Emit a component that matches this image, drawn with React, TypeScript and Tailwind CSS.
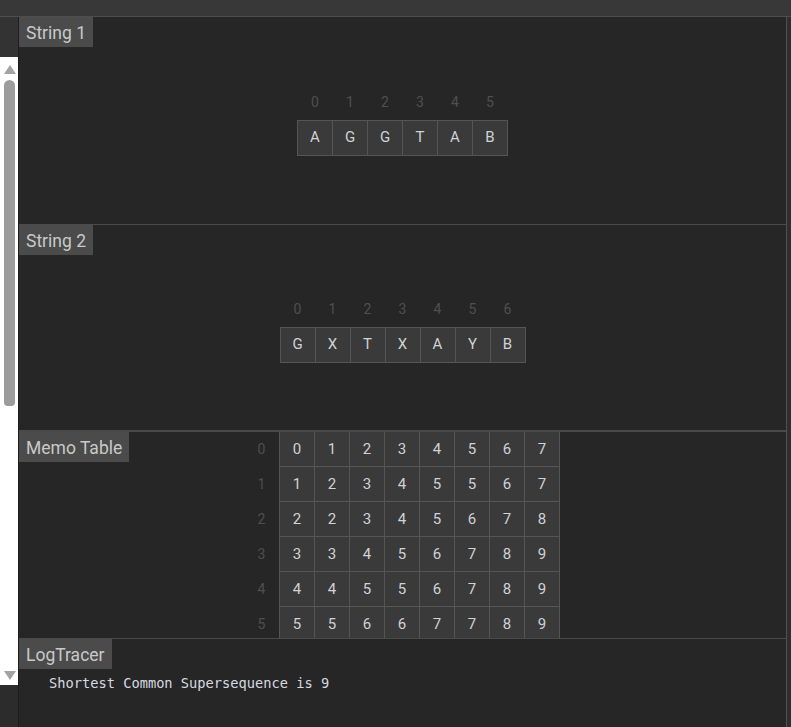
import React from 'react';

const string1 = ['A', 'G', 'G', 'T', 'A', 'B'];
const string2 = ['G', 'X', 'T', 'X', 'A', 'Y', 'B'];
const memo = [
  [0, 1, 2, 3, 4, 5, 6, 7],
  [1, 2, 3, 4, 5, 5, 6, 7],
  [2, 2, 3, 4, 5, 6, 7, 8],
  [3, 3, 4, 5, 6, 7, 8, 9],
  [4, 4, 5, 5, 6, 7, 8, 9],
  [5, 5, 6, 6, 7, 7, 8, 9],
];

const Label = ({ text }: { text: string }) => (
  <div className="absolute left-0 top-0 h-[30px] pt-[1px] px-[7px] bg-[#4b4b4b] text-[#c9c9c9] text-[17.5px] leading-[30px] z-10">
    {text}
  </div>
);

const Array1D = ({ items }: { items: string[] }) => (
  <div className="flex flex-col items-center mt-[5px]">
    <div className="flex h-[20px] mb-[9px] pt-[1px]">
      {items.map((_, i) => (
        <div key={i} className="w-[35px] text-center text-[14px] leading-[20px] text-[#4f4f4f]">
          {i}
        </div>
      ))}
    </div>
    <div className="grid grid-flow-col gap-px p-px bg-[#555555]">
      {items.map((c, i) => (
        <div key={i} className="w-[34px] h-[34px] bg-[#3a3a3a] flex items-center justify-center text-[15px] text-[#cfd2d6]">
          {c}
        </div>
      ))}
    </div>
  </div>
);

const App = () => {
  return (
    <div className="w-[791px] h-[727px] bg-[#2f2f2f] flex flex-col overflow-hidden font-['Roboto',sans-serif]">
      <div className="h-[17px] shrink-0 bg-[#383838] border-b border-[#4e4e4e]" />
      <div className="flex flex-1 min-h-0">
        {/* left scrollbar */}
        <div className="w-[19px] shrink-0 flex flex-col border-r border-[#1d1d1d]">
          <div className="h-[40px] bg-[#333333]" />
          <div className="h-[628px] bg-white flex flex-col items-center pt-[7px]">
            <svg width="12" height="10" viewBox="0 0 12 10" className="ml-[1px]">
              <polygon points="0,10 12,10 6,1" fill="#a3a3a3" />
            </svg>
            <div className="w-[11px] h-[326px] mt-[6px] ml-[1px] rounded-t-[6px] rounded-b-[4px] bg-[#9c9c9c]" />
            <div className="flex-1" />
            <svg width="12" height="10" viewBox="0 0 12 10" className="ml-[1px] mb-[4px]">
              <polygon points="0,0 12,0 6,9" fill="#a3a3a3" />
            </svg>
          </div>
          <div className="flex-1 bg-[#2c2c2c]" />
        </div>

        {/* main panel */}
        <div className="w-[768px] shrink-0 bg-[#262626] border-r border-[#505050] flex flex-col">
          <section className="relative h-[208px] shrink-0 border-b border-[#4a4a4a] flex items-center justify-center">
            <Label text="String 1" />
            <Array1D items={string1} />
          </section>
          <section className="relative h-[207px] shrink-0 border-b-2 border-[#4a4a4a] flex items-center justify-center">
            <Label text="String 2" />
            <Array1D items={string2} />
          </section>
          <section className="relative h-[207px] shrink-0 border-b border-[#4a4a4a] flex items-center justify-center overflow-hidden">
            <Label text="Memo Table" />
            <div className="flex flex-col ml-[-1px] mt-[4px]">
              {memo.map((row, r) => (
                <div key={r} className="flex">
                  <div className="w-[35px] h-[35px] flex items-center justify-center text-[14px] text-[#4f4f4f]">
                    {r}
                  </div>
                  <div className="grid grid-flow-col gap-px pl-px pr-px pb-px bg-[#555555]">
                    {row.map((v, c) => (
                      <div key={c} className="w-[34px] h-[34px] bg-[#3a3a3a] flex items-center justify-center text-[15px] text-[#cfd2d6]">
                        {v}
                      </div>
                    ))}
                  </div>
                </div>
              ))}
            </div>
          </section>
          <section className="relative flex-1 pt-[35px] pl-[30px]">
            <Label text="LogTracer" />
            <div className="font-['DejaVu_Sans_Mono',monospace] text-[13.7px] leading-[18px] text-[#d6dae0] whitespace-pre">
              Shortest Common Supersequence is 9
            </div>
          </section>
        </div>
        <div className="flex-1 bg-[#2f2f2f]" />
      </div>
    </div>
  );
};

export default App;
